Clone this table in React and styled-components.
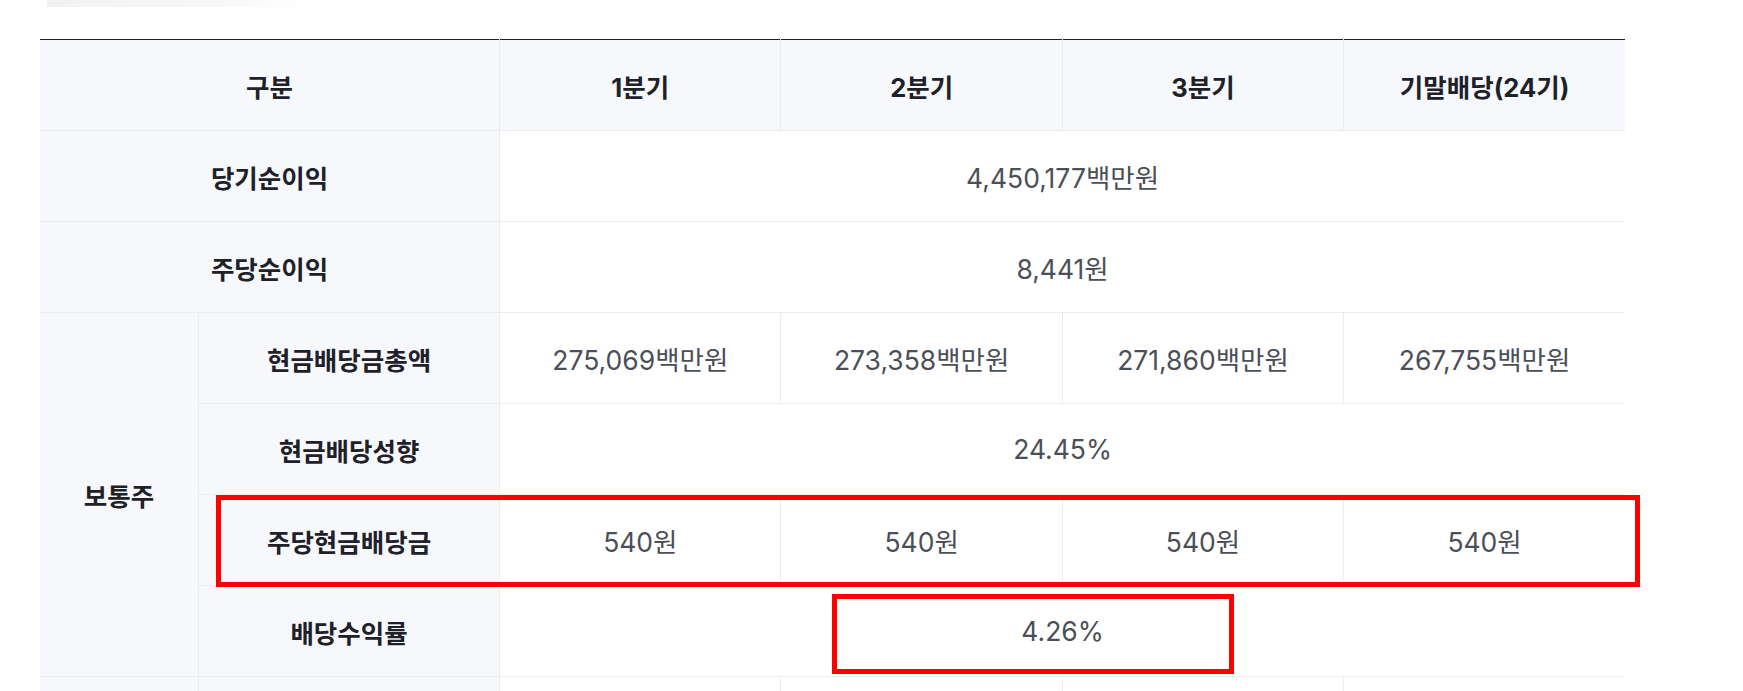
import styled, { createGlobalStyle } from "styled-components"

const GlobalStyle = createGlobalStyle`
    body {
        margin: 0;
        background: #FFFFFF;
        font-family: "Inter", "Noto Sans CJK KR", sans-serif;
    }
`

const quarters = ["1분기", "2분기", "3분기", "기말배당(24기)"]
const totals = ["275,069백만원", "273,358백만원", "271,860백만원", "267,755백만원"]
const perShare = ["540원", "540원", "540원", "540원"]

export default function App() {
    return (
        <PageContainer>
            <GlobalStyle />
            <FadeBar />
            <DividendTable>
                <colgroup>
                    <col style={{ width: "10%" }} />
                    <col style={{ width: "19%" }} />
                    <col style={{ width: "17.75%" }} />
                    <col style={{ width: "17.75%" }} />
                    <col style={{ width: "17.75%" }} />
                    <col style={{ width: "17.75%" }} />
                </colgroup>
                <thead>
                    <tr>
                        <HeadCell colSpan={2}>구분</HeadCell>
                        {quarters.map((q) => <HeadCell key={q}>{q}</HeadCell>)}
                    </tr>
                </thead>
                <tbody>
                    <tr>
                        <LabelCell colSpan={2}>당기순이익</LabelCell>
                        <ValueCell colSpan={4}>4,450,177백만원</ValueCell>
                    </tr>
                    <tr>
                        <LabelCell colSpan={2}>주당순이익</LabelCell>
                        <ValueCell colSpan={4}>8,441원</ValueCell>
                    </tr>
                    <tr>
                        <LabelCell rowSpan={4}>보통주</LabelCell>
                        <LabelCell>현금배당금총액</LabelCell>
                        {totals.map((v) => <ValueCell key={v}>{v}</ValueCell>)}
                    </tr>
                    <tr>
                        <LabelCell>현금배당성향</LabelCell>
                        <ValueCell colSpan={4}>24.45%</ValueCell>
                    </tr>
                    <tr>
                        <LabelCell>주당현금배당금</LabelCell>
                        {perShare.map((v, i) => <ValueCell key={i}>{v}</ValueCell>)}
                    </tr>
                    <tr>
                        <LabelCell>배당수익률</LabelCell>
                        <ValueCell colSpan={4}>4.26%</ValueCell>
                    </tr>
                    <tr>
                        <LabelCell />
                        <LabelCell />
                        <ValueCell />
                        <ValueCell />
                        <ValueCell />
                        <ValueCell />
                    </tr>
                </tbody>
            </DividendTable>

            <Highlight $left={216} $top={495} $width={1424} $height={92} />
            <Highlight $left={832} $top={594} $width={402} $height={80} />
        </PageContainer>
    )
}

const PageContainer = styled.div`
    position: relative;
    padding: 0 118px 0 40px;
    min-height: 691px;
`
const FadeBar = styled.div`
    margin-left: 7px;
    width: 266px;
    height: 7px;
    background: linear-gradient(to right, #F2F2F2, #F7F7F7 60%, #FFFFFF);
`
const DividendTable = styled.table`
    margin-top: 32px;
    width: 1585px;
    table-layout: fixed;
    border-collapse: collapse;
    border-top: 1px solid #222222;
    text-align: center;
    td, th {
        height: 90px;
        padding: 0;
        border: 1px solid #EBECF0;
        vertical-align: middle;
    }
    tr td:first-child, tr th:first-child {
        border-left: none;
    }
    tr td:last-child, tr th:last-child {
        border-right: none;
    }
    thead th {
        border-top: none;
    }
`
const HeadCell = styled.th`
    background-color: #F7F8FC;
    color: #1F2128;
    font-size: 25.5px;
    font-weight: 700;
`
const LabelCell = styled.td`
    background-color: #F7F8FC;
    color: #1F2128;
    font-size: 25.5px;
    font-weight: 700;
`
const ValueCell = styled.td`
    background-color: #FFFFFF;
    color: #4B4F57;
    font-size: 26.5px;
    font-weight: 400;
`
const Highlight = styled.div`
    position: absolute;
    left: ${props => props.$left}px;
    top: ${props => props.$top}px;
    width: ${props => props.$width}px;
    height: ${props => props.$height}px;
    box-sizing: border-box;
    border: 5px solid #FF0000;
    pointer-events: none;
`
